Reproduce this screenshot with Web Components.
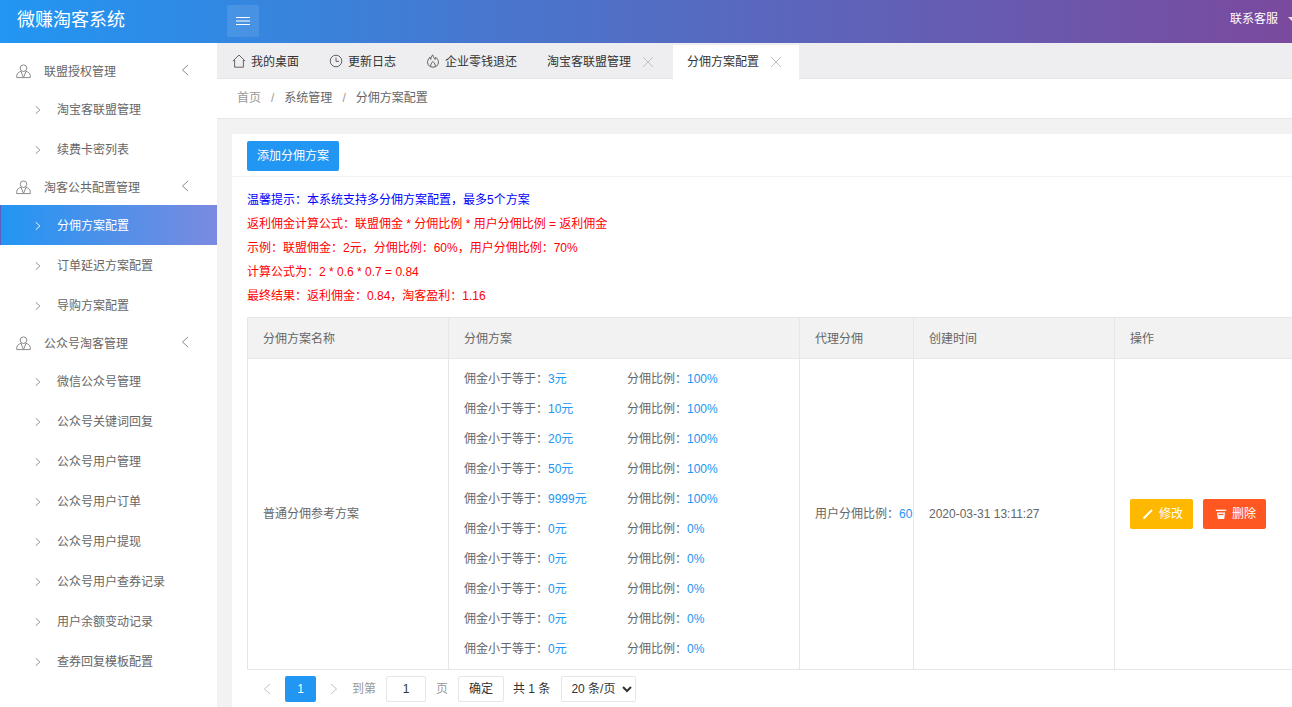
<!DOCTYPE html>
<html lang="zh-CN">
<head>
<meta charset="utf-8">
<title>微赚淘客系统</title>
<style>
  html, body { margin: 0; height: 100%; overflow: hidden; }
  body { font: 12px/1.5 "Liberation Sans", "Noto Sans CJK SC", sans-serif; color: #666; background: #f2f2f2; }
</style>
</head>
<body>
<wk-app>
  <wk-header slot="header" title="微赚淘客系统" service="联系客服"></wk-header>
  <wk-sidebar slot="sidebar">
    <wk-menu-group label="联盟授权管理"></wk-menu-group>
    <wk-menu-item>淘宝客联盟管理</wk-menu-item>
    <wk-menu-item>续费卡密列表</wk-menu-item>
    <wk-menu-group label="淘客公共配置管理"></wk-menu-group>
    <wk-menu-item active>分佣方案配置</wk-menu-item>
    <wk-menu-item>订单延迟方案配置</wk-menu-item>
    <wk-menu-item>导购方案配置</wk-menu-item>
    <wk-menu-group label="公众号淘客管理"></wk-menu-group>
    <wk-menu-item>微信公众号管理</wk-menu-item>
    <wk-menu-item>公众号关键词回复</wk-menu-item>
    <wk-menu-item>公众号用户管理</wk-menu-item>
    <wk-menu-item>公众号用户订单</wk-menu-item>
    <wk-menu-item>公众号用户提现</wk-menu-item>
    <wk-menu-item>公众号用户查券记录</wk-menu-item>
    <wk-menu-item>用户余额变动记录</wk-menu-item>
    <wk-menu-item>查券回复模板配置</wk-menu-item>
  </wk-sidebar>
  <wk-tabs slot="tabs">
    <wk-tab icon="home">我的桌面</wk-tab>
    <wk-tab icon="clock">更新日志</wk-tab>
    <wk-tab icon="fire">企业零钱退还</wk-tab>
    <wk-tab closable>淘宝客联盟管理</wk-tab>
    <wk-tab closable active>分佣方案配置</wk-tab>
  </wk-tabs>
  <wk-breadcrumb slot="crumbs"></wk-breadcrumb>
  <wk-card slot="content">
    <wk-button slot="toolbar" color="#2196f3">添加分佣方案</wk-button>
    <wk-notes></wk-notes>
    <wk-plan-table></wk-plan-table>
    <wk-pager></wk-pager>
  </wk-card>
</wk-app>

<script>
  // HELPERS
  const ICONS = {
    user: '<circle cx="7.500" cy="4.200" r="3.300"/><path d="M5 7.300C2.800 8 1 9.200.8 11.200L.7 13.600H14.300L14.200 11.200C14 9.200 12.200 8 10 7.300"/><path d="M5 7.300 7.500 13.600 10 7.300"/>',
    home: '<path d="M.8 7.200 7 1l6.200 6.200"/><path d="M2.600 6v7.200h8.800V6"/>',
    clock: '<circle cx="7" cy="7" r="5.800"/><path d="M7 3.600V7.400H10"/>',
    fire: '<path d="M6.800.8C6.800 2.800 8.300 3.600 9 5.500C9.600 4.800 9.800 4 9.700 3.200C11.600 4.800 12.700 6.800 12.400 9C12 11.700 9.800 13.200 7 13.200C4.200 13.200 2 11.700 1.600 9C1.300 6.800 2.400 4.800 3.900 3.200C3.900 4.200 4.200 5 4.800 5.500C4.800 3.800 5.500 2 6.800.8Z"/><path d="M4.800 12.500C4.300 10.800 5.300 9.300 6.800 7.500C8.500 9 9.700 10.800 9.200 12.500"/>',
    close: '<path d="M1 1 11 11M11 1 1 11"/>',
    left: '<path d="M7 1 1.500 6 7 11"/>',
    right: '<path d="M1 1 6.500 6 1 11"/>'
  };

  function icon(name, w, h, vb, stroke = "1") {
    return `<svg width="${w}" height="${h}" viewBox="0 0 ${vb}" fill="none" stroke="currentColor" stroke-width="${stroke}" aria-hidden="true">${ICONS[name]}</svg>`;
  }

  class ShadowElement extends HTMLElement {
    constructor() {
      super();
      this.attachShadow({ mode: "open" }).innerHTML = this.render();
    }
    render() { return ""; }
  }

  class WkApp extends ShadowElement {
    render() {
      return `
        <style>
          :host { display: grid; grid-template: 43px 1fr / 217px 1fr; height: 100vh; overflow: hidden; }
          .header { grid-column: 1 / 3; min-width: 0; }
          .side { background: #fff; min-height: 0; overflow: hidden; }
          .main { display: flex; flex-direction: column; min-width: 0; overflow: hidden; }
          .content { padding: 15px 0 0 15px; width: 1110px; }
        </style>
        <div class="header"><slot name="header"></slot></div>
        <div class="side"><slot name="sidebar"></slot></div>
        <div class="main">
          <slot name="tabs"></slot>
          <slot name="crumbs"></slot>
          <div class="content"><slot name="content"></slot></div>
        </div>`;
    }
  }

  class WkHeader extends ShadowElement {
    render() {
      return `
        <style>
          :host { display: flex; align-items: center; height: 43px; color: #fff; overflow: hidden;
            background: linear-gradient(90deg, #2196f3 0%, #4a75cc 40%, #7a4a9e 100%); }
          .logo { width: 227px; padding-left: 17px; box-sizing: border-box; font-size: 18px; line-height: 40px; margin-bottom: 3px; }
          .toggle { width: 32px; height: 32px; margin-bottom: 1px; display: flex; align-items: center; justify-content: center; background: rgba(255,255,255,.1); border-radius: 2px; }
          .right { margin-left: auto; margin-right: -6px; display: flex; align-items: center; gap: 10px; margin-bottom: 5px; }
          .caret { width: 0; height: 0; border: 5px solid transparent; border-top-color: #fff; border-bottom-width: 0; opacity: .85; }
        </style>
        <div class="logo">${this.getAttribute("title")}</div>
        <div class="toggle">
          <svg width="14" height="10" viewBox="0 0 14 10" fill="none" stroke="#fff"><path d="M0 1.500H14M0 5H14M0 8.500H14"/></svg>
        </div>
        <div class="right"><span>${this.getAttribute("service")}</span><i class="caret"></i></div>`;
    }
  }

  class WkSidebar extends ShadowElement {
    render() {
      return `
        <style>:host { display: block; padding-top: 10px; }</style>
        <slot></slot>`;
    }
  }

  class WkMenuGroup extends ShadowElement {
    render() {
      return `
        <style>
          :host { display: flex; align-items: center; height: 36px; box-sizing: border-box; padding-top: 1px; color: #666; }
          .user { margin-left: 16px; width: 15px; height: 15px; color: #8a8a8a; display: flex; }
          .label { margin-left: 13px; flex: 1; }
          .arrow { margin-right: 28px; color: #888; display: flex; margin-bottom: 3px; }
        </style>
        <span class="user">${icon("user", 15, 15, "15 15")}</span>
        <span class="label">${this.getAttribute("label")}</span>
        <span class="arrow">${icon("left", 8, 12, "8 12")}</span>`;
    }
  }

  class WkMenuItem extends ShadowElement {
    render() {
      return `
        <style>
          :host { display: flex; align-items: center; height: 40px; color: #666; padding: 1px 0 0 35px; box-sizing: border-box; }
          :host([active]) { color: #fff; background: linear-gradient(90deg, #2196f3, #7b8ae0); box-shadow: inset 1px 0 0 #5a5fc0; }
          .arrow { display: flex; width: 22px; color: #888; }
          :host([active]) .arrow { color: #fff; }
        </style>
        <span class="arrow">${icon("right", 6, 10, "8 12", "1.2")}</span>
        <slot></slot>`;
    }
  }

  class WkTabs extends ShadowElement {
    render() {
      return `
        <style>
          :host { display: flex; align-items: flex-end; flex: none; height: 36px; box-sizing: border-box; padding: 2px 0 0 1px; gap: 2px; background: #eeeef0; border-bottom: 1px solid #e6e6e6; }
        </style>
        <slot></slot>`;
    }
  }

  class WkTab extends ShadowElement {
    render() {
      const name = this.getAttribute("icon");
      const glyph = name ? `<span class="glyph">${icon(name, 14, 14, "14 14", "0.9")}</span>` : "";
      const close = this.hasAttribute("closable") ? `<span class="close">${icon("close", 12, 12, "12 12", "0.9")}</span>` : "";
      return `
        <style>
          :host { display: flex; align-items: center; height: 34px; margin-bottom: -1px; padding: 0 14px; color: #333; }
          :host([closable]) { padding-right: 17px; }
          :host([active]) { background: #fff; }
          .glyph { display: flex; width: 14px; margin-right: 5px; color: #555; margin-bottom: 2px; }
          .close { display: flex; margin-left: 11px; color: #bbb; }
        </style>
        ${glyph}<slot></slot>${close}`;
    }
  }

  class WkBreadcrumb extends ShadowElement {
    render() {
      return `
        <style>
          :host { display: flex; align-items: center; flex: none; height: 40px; box-sizing: border-box; padding: 0 0 2px 20px; background: #fff; border-bottom: 1px solid #e8e8e8; color: #666; }
          .home { color: #999; }
          .sep { color: #999; margin: 0 10px; }
        </style>
        <span class="home">首页</span><span class="sep">/</span><span>系统管理</span><span class="sep">/</span><span>分佣方案配置</span>`;
    }
  }

  class WkCard extends ShadowElement {
    render() {
      return `
        <style>
          :host { display: block; background: #fff; }
          .toolbar { height: 43px; box-sizing: border-box; padding: 7px 15px 0; border-bottom: 1px solid #f2f2f2; }
          .body { padding: 10px 0 0 15px; }
        </style>
        <div class="toolbar"><slot name="toolbar"></slot></div>
        <div class="body"><slot></slot></div>`;
    }
  }

  class WkButton extends ShadowElement {
    render() {
      const c = this.getAttribute("color");
      return `
        <style>
          :host { display: inline-flex; align-items: center; justify-content: center; gap: 5px; height: 30px; padding: 0 10px; color: #fff; background: ${c}; border-radius: 2px; }
          ::slotted(svg) { display: block; margin-left: 2px; }
        </style>
        <slot name="icon"></slot><slot></slot>`;
    }
  }

  class WkNotes extends ShadowElement {
    render() {
      const reds = [
        "返利佣金计算公式：联盟佣金 * 分佣比例 * 用户分佣比例 = 返利佣金",
        "示例：联盟佣金：2元，分佣比例：60%，用户分佣比例：70%",
        "计算公式为：2 * 0.6 * 0.7 = 0.84",
        "最终结果：返利佣金：0.84，淘客盈利：1.16"
      ];
      return `
        <style>
          :host { display: block; line-height: 24px; color: #f00; padding-top: 1px; margin-bottom: 9px; }
          .tip { color: #00f; }
        </style>
        <div class="tip">温馨提示：本系统支持多分佣方案配置，最多5个方案</div>
        ${reds.map((line) => `<div>${line}</div>`).join("")}`;
    }
  }

  class WkPlanTable extends ShadowElement {
    render() {
      const tiers = ["3元", "10元", "20元", "50元", "9999元", "0元", "0元", "0元", "0元", "0元"];
      const rates = ["100%", "100%", "100%", "100%", "100%", "0%", "0%", "0%", "0%", "0%"];
      const rows = tiers.map((tier, i) => `
        <div class="tier">
          <span>佣金小于等于：<b>${tier}</b></span>
          <span>分佣比例：<b>${rates[i]}</b></span>
        </div>`).join("");
      return `
        <style>
          :host { display: block; }
          table { border-collapse: collapse; table-layout: fixed; width: 1093px; }
          th, td { border: 1px solid #e6e6e6; padding: 0 15px; text-align: left; font-weight: 400; overflow: hidden; white-space: nowrap; }
          th { height: 41px; padding-top: 1px; box-sizing: border-box; background: #f2f2f2; }
          td.clip { padding-right: 0; }
          .plans { padding-top: 5px; padding-bottom: 5px; }
          .tier { display: grid; grid-template-columns: 163px 1fr; height: 30px; line-height: 30px; }
          b { font-weight: 400; color: #2196f3; }
          .ops { display: flex; gap: 10px; }
        </style>
        <table>
          <colgroup><col style="width:201px"><col style="width:351px"><col style="width:114px"><col style="width:201px"><col></colgroup>
          <thead><tr><th>分佣方案名称</th><th>分佣方案</th><th>代理分佣</th><th>创建时间</th><th>操作</th></tr></thead>
          <tbody><tr>
            <td>普通分佣参考方案</td>
            <td class="plans">${rows}</td>
            <td class="clip">用户分佣比例：<b>60</b></td>
            <td>2020-03-31 13:11:27</td>
            <td><div class="ops">
              <wk-button color="#ffb800"><svg slot="icon" width="12" height="12" viewBox="0 0 12 12" fill="none" stroke="#fff" stroke-width="2"><path d="M1.500 10.500 10 2"/></svg>修改</wk-button>
              <wk-button color="#ff5722"><svg slot="icon" width="12" height="12" viewBox="0 0 12 12" fill="none" stroke="#fff" stroke-width="1.300"><path d="M.8 2.300H11.200"/><path d="M2 4.600H10L9.200 11H2.800Z" fill="#fff" stroke="none"/><path d="M3.500 6.500H8.500" stroke="#ff5722"/></svg>删除</wk-button>
            </div></td>
          </tr></tbody>
        </table>`;
    }
  }

  class WkPager extends ShadowElement {
    render() {
      return `
        <style>
          :host { display: flex; align-items: center; height: 38px; padding-left: 16px; color: #333; }
          .arrow { display: flex; color: #c2c2c2; }
          .page { width: 31px; height: 26px; margin: 0 14px 0 14px; background: #2196f3; color: #fff; border-radius: 2px; display: flex; align-items: center; justify-content: center; }
          .muted { color: #999; }
          input, .ok, select { box-sizing: border-box; height: 26px; border: 1px solid #e6e6e6; border-radius: 2px; background: #fff; font: inherit; color: #333; }
          input { width: 40px; margin: 0 10px; text-align: center; padding: 0; }
          .ok { width: 46px; margin: 0 9px 0 10px; display: flex; align-items: center; justify-content: center; }
          select { width: 75px; margin-left: 11px; padding: 0 0 0 5px; }
        </style>
        <span class="arrow">${icon("left", 8, 12, "8 12")}</span>
        <span class="page">1</span>
        <span class="arrow" style="margin-right:14px">${icon("right", 8, 12, "8 12")}</span>
        <span class="muted">到第</span>
        <input value="1">
        <span class="muted">页</span>
        <span class="ok">确定</span>
        <span>共 1 条</span>
        <select><option>20 条/页</option></select>`;
    }
  }

  customElements.define("wk-app", WkApp);
  customElements.define("wk-header", WkHeader);
  customElements.define("wk-sidebar", WkSidebar);
  customElements.define("wk-menu-group", WkMenuGroup);
  customElements.define("wk-menu-item", WkMenuItem);
  customElements.define("wk-tabs", WkTabs);
  customElements.define("wk-tab", WkTab);
  customElements.define("wk-breadcrumb", WkBreadcrumb);
  customElements.define("wk-card", WkCard);
  customElements.define("wk-button", WkButton);
  customElements.define("wk-notes", WkNotes);
  customElements.define("wk-plan-table", WkPlanTable);
  customElements.define("wk-pager", WkPager);
</script>
</body>
</html>
